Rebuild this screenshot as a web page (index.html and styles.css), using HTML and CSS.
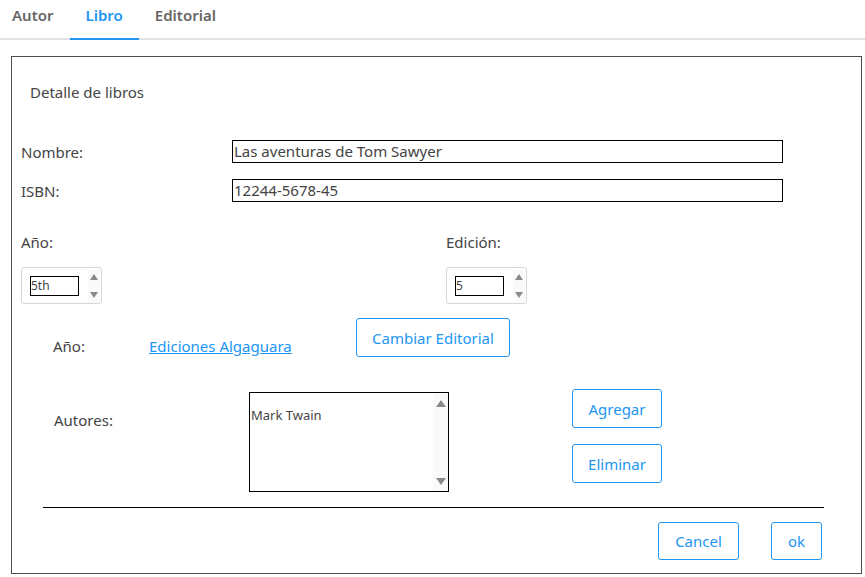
FILE: index.html
```html
<!DOCTYPE html>
<html lang="es">
<head>
<meta charset="utf-8">
<title>Libro</title>
<link rel="stylesheet" href="styles.css">
</head>
<body>
<nav class="tabs">
  <a class="tab">Autor</a>
  <a class="tab active">Libro</a>
  <a class="tab">Editorial</a>
</nav>
<section class="panel">
  <div class="title">Detalle de libros</div>

  <div class="field-row first">
    <label class="field-label">Nombre:</label>
    <div class="text-input">Las aventuras de Tom Sawyer</div>
  </div>
  <div class="field-row second">
    <label class="field-label">ISBN:</label>
    <div class="text-input">12244-5678-45</div>
  </div>

  <div class="years">
    <div class="year-col">
      <div class="year-label">Año:</div>
      <div class="spinner">
        <div class="spin-input">5th</div>
        <div class="spin-arrows"><span class="tri up"></span><span class="tri down"></span></div>
      </div>
    </div>
    <div class="year-col">
      <div class="year-label">Edición:</div>
      <div class="spinner">
        <div class="spin-input">5</div>
        <div class="spin-arrows"><span class="tri up"></span><span class="tri down"></span></div>
      </div>
    </div>
  </div>

  <div class="editorial-row">
    <div class="ed-label">Año:</div>
    <div class="ed-link"><a href="#">Ediciones Algaguara</a></div>
    <button class="btn btn-change">Cambiar Editorial</button>
  </div>

  <div class="authors-row">
    <div class="au-label">Autores:</div>
    <div class="listbox">
      <div class="list-items"><div class="option">Mark Twain</div></div>
      <div class="list-scroll"><span class="tri up"></span><span class="tri down"></span></div>
    </div>
    <div class="au-buttons">
      <button class="btn btn-side">Agregar</button>
      <button class="btn btn-side">Eliminar</button>
    </div>
  </div>

  <div class="divider"></div>

  <div class="footer">
    <button class="btn btn-cancel">Cancel</button>
    <button class="btn btn-ok">ok</button>
  </div>
</section>
</body>
</html>
```
FILE: styles.css
```css
* { box-sizing: border-box; }
body {
  margin: 0;
  font-family: "Noto Sans", "Open Sans", sans-serif;
  color: #444;
  background: #fff;
  width: 865px;
  height: 577px;
  overflow: hidden;
}
.tabs {
  display: flex;
  height: 40px;
  border-bottom: 2px solid #dee2e6;
}
.tab {
  padding: 0 16px;
  height: 40px;
  line-height: 31px;
  font-size: 15px;
  font-weight: 600;
  color: #666;
  margin-bottom: -2px;
  border-bottom: 2px solid transparent;
}
.tab:first-child { padding-left: 12px; }
.tab.active { color: #2196f3; border-bottom-color: #2196f3; }

.panel {
  margin: 16px 3px 0 11px;
  height: 518px;
  border: 1px solid #4a4e54;
}
.title {
  margin: 25px 0 0 18px;
  font-size: 15px;
  line-height: 20px;
  color: #444;
}
.field-row {
  display: flex;
  align-items: center;
  padding-left: 9px;
  height: 23px;
}
.field-row.first { margin-top: 38px; }
.field-row.second { margin-top: 16px; }
.field-label {
  width: 211px;
  flex: none;
  font-size: 15px;
  color: #444;
}
.text-input {
  width: 551px;
  height: 23px;
  border: 1px solid #000;
  font-size: 15px;
  line-height: 20px;
  padding-left: 1px;
  color: #444;
}

.years {
  display: flex;
  margin-top: 30px;
  padding-left: 9px;
}
.year-col { width: 425px; flex: none; }
.year-col + .year-col { width: auto; }
.year-label {
  font-size: 15px;
  line-height: 20px;
  color: #444;
}
.spinner {
  margin-top: 15px;
  width: 81px;
  height: 37px;
  border: 1px solid #d6d6d6;
  border-radius: 3px;
  display: flex;
  padding: 8px 0 0 8px;
}
.spin-input {
  width: 49px;
  height: 20px;
  border: 1px solid #000;
  font-size: 12px;
  line-height: 18px;
  color: #444;
}
.spin-arrows {
  margin: -6px 0 0 9px;
  width: 12px;
  height: 33px;
  background: #fafafa;
  display: flex;
  flex-direction: column;
  align-items: center;
  justify-content: space-between;
  padding: 4px 0 5px;
}
.tri {
  width: 0;
  height: 0;
  border-left: 4px solid transparent;
  border-right: 4px solid transparent;
}
.tri.up { border-bottom: 6px solid #8a8a8a; }
.tri.down { border-top: 6px solid #8a8a8a; }
.list-scroll .tri { border-left-width: 5px; border-right-width: 5px; }
.list-scroll .tri.up { border-bottom-width: 7px; }
.list-scroll .tri.down { border-top-width: 7px; }

.editorial-row {
  display: flex;
  align-items: flex-end;
  margin-top: 14px;
  padding-left: 41px;
  height: 39px;
}
.ed-label {
  width: 96px;
  flex: none;
  font-size: 15px;
  line-height: 20px;
  margin-bottom: 1px;
  color: #444;
}
.ed-link {
  width: 207px;
  flex: none;
  font-size: 15px;
  line-height: 20px;
  margin-bottom: 1px;
}
.ed-link a { color: #2196f3; text-decoration: underline; }
.btn {
  font-family: "Noto Sans", "Open Sans", sans-serif;
  font-size: 15px;
  color: #2196f3;
  background: #fff;
  border: 1px solid #2196f3;
  border-radius: 3px;
  padding: 0;
}
.btn-change { width: 154px; height: 39px; align-self: flex-start; }

.authors-row {
  display: flex;
  margin-top: 32px;
  padding-left: 42px;
  height: 103px;
}
.au-label {
  width: 195px;
  flex: none;
  margin-top: 21px;
  font-size: 15px;
  line-height: 20px;
  color: #444;
}
.listbox {
  margin-top: 3px;
  width: 200px;
  height: 100px;
  border: 1px solid #000;
  display: flex;
}
.list-items {
  flex: 1;
  padding: 13px 0 0 1px;
}
.option {
  font-size: 13px;
  line-height: 18px;
  color: #444;
}
.list-scroll {
  width: 15px;
  background: #fafafa;
  display: flex;
  flex-direction: column;
  align-items: center;
  justify-content: space-between;
  padding: 7px 0 6px;
}
.au-buttons {
  margin-left: 123px;
  display: flex;
  flex-direction: column;
  gap: 16px;
}
.btn-side { width: 90px; height: 39px; }

.divider {
  margin: 15px 0 0 31px;
  width: 781px;
  height: 1px;
  background: #000;
}
.footer {
  display: flex;
  justify-content: flex-end;
  gap: 32px;
  margin-top: 14px;
  padding-right: 39px;
}
.btn-cancel { width: 81px; height: 38px; }
.btn-ok { width: 51px; height: 38px; }
```
